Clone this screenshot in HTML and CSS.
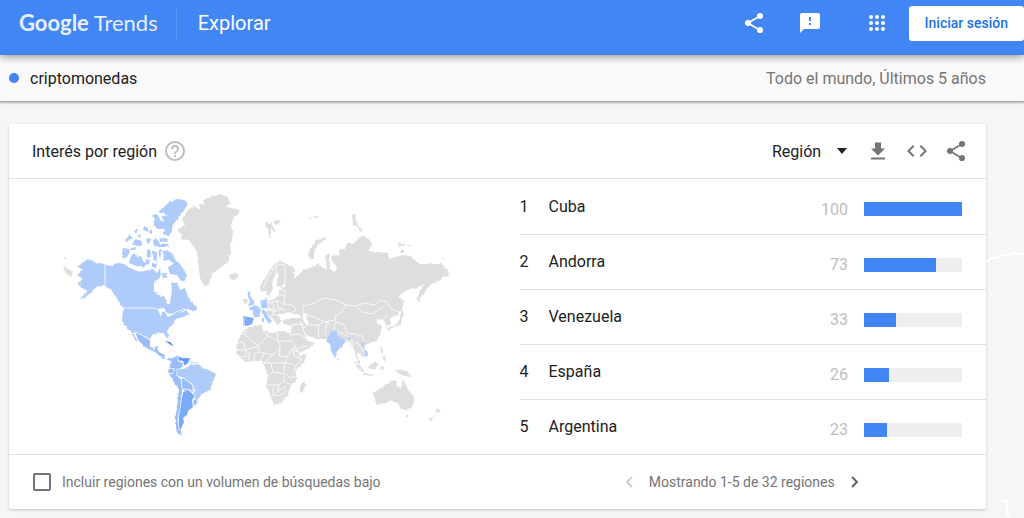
FILE: index.html
```html
<!DOCTYPE html>
<html lang="es">
<head>
    <meta charset="UTF-8">
    <meta name="viewport" content="width=device-width, initial-scale=1.0">
    <title>criptomonedas - Explorar - Google Trends</title>
    <link rel="stylesheet" href="styles.css">
</head>
<body>
    <header class="navbar">
        <a href="#" class="logo"><span class="logo-google">Google</span> Trends</a>
        <h1 class="page-name">Explorar</h1>
        <div class="nav-actions">
            <button class="icon-btn" aria-label="Compartir">
                <svg width="24" height="24" viewBox="0 0 24 24"><path d="M18 16.1c-.8 0-1.400.3-2 .8l-7.100-4.200c.1-.200.1-.5.1-.7s0-.5-.1-.7L16 7.200c.5.5 1.200.8 2 .8a3 3 0 1 0-3-3c0 .2 0 .5.1.7L8 9.800A3 3 0 1 0 8 14.200l7.100 4.200c-.1.200-.1.400-.1.600a3 3 0 1 0 3-2.900z"/></svg>
            </button>
            <button class="icon-btn feedback" aria-label="Enviar comentarios">
                <svg width="24" height="24" viewBox="0 0 24 24"><path d="M20 2H4a2 2 0 0 0-2 2v18l4-4h14a2 2 0 0 0 2-2V4a2 2 0 0 0-2-2zm-7 12h-2v-2h2v2zm0-4h-2V6h2v4z"/></svg>
            </button>
            <button class="icon-btn apps" aria-label="Aplicaciones de Google">
                <svg width="24" height="24" viewBox="0 0 24 24">
                    <circle cx="6" cy="6" r="2"/><circle cx="12" cy="6" r="2"/><circle cx="18" cy="6" r="2"/>
                    <circle cx="6" cy="12" r="2"/><circle cx="12" cy="12" r="2"/><circle cx="18" cy="12" r="2"/>
                    <circle cx="6" cy="18" r="2"/><circle cx="12" cy="18" r="2"/><circle cx="18" cy="18" r="2"/>
                </svg>
            </button>
            <a href="#" class="signin-btn">Iniciar sesión</a>
        </div>
    </header>

    <div class="term-bar">
        <span class="term-dot"></span>
        <span class="term">criptomonedas</span>
        <span class="filters">Todo el mundo, Últimos 5 años</span>
    </div>

    <main class="container">
        <svg class="bg-line" width="38" height="270" viewBox="0 0 38 270" fill="none" stroke="#fff" stroke-width="2">
            <path d="M0 12L6 8L10 8L16 5L22 5L28 3L38 4"/>
            <path d="M16 251H21V262L24 268"/>
        </svg>
        <section class="card">
            <div class="card-header">
                <h2>Interés por región</h2>
                <button class="icon-btn help" aria-label="Ayuda">
                    <svg width="24" height="24" viewBox="0 0 24 24"><path d="M11 18h2v-2h-2v2zm1-16a10 10 0 1 0 0 20 10 10 0 0 0 0-20zm0 18a8 8 0 1 1 0-16 8 8 0 0 1 0 16zm0-14a4 4 0 0 0-4 4h2a2 2 0 1 1 4 0c0 2-3 1.750-3 5h2c0-2.250 3-2.500 3-5a4 4 0 0 0-4-4z"/></svg>
                </button>
                <div class="card-tools">
                    <select class="region-select" aria-label="Tipo de zona">
                        <option>Región</option>
                        <option>Ciudad</option>
                    </select>
                    <svg class="caret" width="10" height="6" viewBox="0 0 10 6"><path d="M0 0h10L5 6z"/></svg>
                    <button class="icon-btn" aria-label="Descargar">
                        <svg width="24" height="24" viewBox="0 0 24 24"><path d="M19 9.500h-4v-6H9v6H5l7 7 7-7zM5 18.500v2h14v-2H5z"/></svg>
                    </button>
                    <button class="icon-btn" aria-label="Insertar">
                        <svg width="24" height="24" viewBox="0 0 24 24"><path d="M9.400 16.600L4.800 12l4.600-4.600L8 6l-6 6 6 6 1.400-1.400zm5.200 0l4.600-4.600-4.600-4.600L16 6l6 6-6 6-1.400-1.400z"/></svg>
                    </button>
                    <button class="icon-btn" aria-label="Compartir">
                        <svg width="24" height="24" viewBox="0 0 24 24"><path d="M18 16.100c-.8 0-1.400.3-2 .8l-7.100-4.200c.1-.2.1-.5.1-.7s0-.5-.1-.7L16 7.200c.5.5 1.200.8 2 .8a3 3 0 1 0-3-3c0 .2 0 .5.1.7L8 9.800A3 3 0 1 0 8 14.200l7.100 4.200c-.1.200-.1.400-.1.600a3 3 0 1 0 3-2.900z"/></svg>
                    </button>
                </div>
            </div>

            <div class="card-body">
                <div class="map">
                    <svg width="410" height="260" viewBox="50 185 410 260" role="img" aria-label="Mapa del mundo">
                        <defs>
                            <filter id="coast" x="-5%" y="-5%" width="110%" height="110%" color-interpolation-filters="sRGB">
                                <feTurbulence type="fractalNoise" baseFrequency="0.35" numOctaves="1" seed="4"/>
                                <feDisplacementMap in="SourceGraphic" scale="3" xChannelSelector="R" yChannelSelector="G"/>
                                <feGaussianBlur stdDeviation="0.35"/>
                            </filter>
                        </defs>

                        <g class="land" filter="url(#coast)">
                            <!-- Greenland, Iceland, Svalbard -->
                            <path d="M213 196L222 194L229 199L231 203L225 207L233 208L240 210L238 215L234 217L231 225L233 235L230 245L231 253L228 262L220 268L212 274L209 285L204 286L200 278L198 262L197 252L193 245L189 240L180 239L182 235L177 230L185 225L182 219L188 210L194 206L200 210L199 203L205 205L203 200Z"/>
                            <path d="M229 275L237 273L239 277L234 280L230 279Z"/>
                            <path d="M265 222L268 222L269 226L271 221L272 226L276 231L274 232L271 228L271 237L269 236L268 229L266 227ZM273 221L280 220L279 224L275 225Z"/>
                            <path d="M63 266L68 269L73 272L71 277L66 273ZM64 258h2v1h-2Z"/>
                            <!-- Arctic islands of Russia -->
                            <path d="M352 215L355 214L356 220L359 227L353 225ZM358 226L363 230L360 232ZM398 243L405 243L404 246L399 246ZM325 237L326 239L318 244L314 252L314 259L310 259L308 255L311 247L316 241ZM308 218h3v1h-3ZM314 216h4v2h-4ZM407 245h4v1h-4ZM401 250h3v2h-3ZM442 258h3v1h-3Z"/>
                            <!-- Scandinavia -->
                            <path d="M260 288L262 282L267 276L270 270L275 264L280 261L285 263L293 267L296 271L290 274L286 272L285 282L282 287L277 286L277 280L279 275L277 272L274 277L272 284L273 288L269 297L266 291L261 292Z"/>
                            <path d="M244 299L247 299L246 304L243 303Z"/>
                            <!-- Europe and Asia -->
                            <path d="M268 301L274 299L278 296L279 289L285 287L285 270L291 272L295 274L293 279L299 275L303 270L310 268L318 264L323 268L327 270L325 256L329 253L330 269L335 272L337 268L332 260L332 254L340 256L338 251L345 248L347 243L354 243L358 239L362 235L370 240L372 245L368 251L378 252L388 253L389 259L396 257L403 255L411 256L413 259L420 264L430 264L442 264L448 271L450 276L442 277L440 281L431 284L427 289L422 295L419 303L417 298L420 290L425 283L417 288L407 290L398 297L404 301L402 309L397 315L390 318L391 324L387 326L383 320L378 319L376 322L382 326L380 335L376 341L366 344L364 348L367 354L363 357L358 352L357 356L361 364L358 363L355 352L351 345L347 340L335 336L326 339L316 339L307 335L303 333L308 341L315 343L308 349L299 353L295 346L290 336L292 326L284 324L283 320L291 318L287 314L278 314L281 321L278 326L274 320L267 314L267 306Z"/>
                            <!-- Africa -->
                            <path d="M248 327L255 326L262 325L263 330L273 333L278 331L289 332L292 340L296 351L300 356L307 354L304 362L296 371L296 381L290 387L288 395L281 403L274 405L271 397L266 385L268 376L264 366L262 361L253 361L245 362L236 353L237 343L242 333Z"/>
                            <path d="M304 381L306 384L303 392L300 393L300 386Z"/>
                            <!-- Australia and Pacific islands -->
                            <path d="M373 393L378 390L383 387L386 384L390 383L392 380L397 381L396 385L401 388L403 379L406 385L409 391L414 397L414 402L411 408L405 410L400 408L398 403L390 401L383 404L376 405L375 399Z"/>
                            <path d="M405 415L409 415L407 418ZM437 407L441 411L436 414ZM436 415L431 421L428 420ZM394 369L400 370L407 371L412 377L404 376L398 373ZM368 367L374 362L378 363L375 370L369 369ZM354 360L358 364L365 371L363 373L357 367ZM364 373L374 375L373 376L364 375ZM380 367L384 366L382 371ZM380 347L383 348L383 354L381 352ZM382 356L386 357L385 361ZM401 311L405 314L402 317L401 324L395 327L390 329L388 332L387 328L396 325L400 319ZM398 300L401 306L403 312L400 311ZM337 358L339 360L337 361Z"/>
                            <!-- Guyanas -->
                            <path d="M189 360L197 362L199 364L192 366Z"/>
                        </g>

                        <g class="low" filter="url(#coast)">
                            <!-- Alaska and Canada -->
                            <path d="M82 263L88 259L97 263L105 264L110 266L118 263L124 264L130 268L140 272L153 269L157 273L160 268L161 275L159 278L154 283L154 292L159 295L165 297L167 304L170 303L172 290L171 283L177 283L180 290L185 288L188 297L192 303L197 307L196 311L190 310L185 309L178 314L186 310L190 314L183 317L176 319L171 326L167 331L169 339L166 337L163 333L153 334L150 339L143 336L135 333L127 329L122 321L123 308L116 297L110 289L104 286L98 286L93 290L86 297L80 299L87 291L80 287L78 282L83 279L77 275L83 270L78 267Z"/>
                            <!-- Canadian archipelago -->
                            <path d="M158 212L163 208L168 203L173 200L178 199L184 200L188 204L183 212L178 218L173 225L172 231L169 236L163 234L165 229L158 229L153 224L155 219L152 216L157 214L160 219L163 222L162 216L168 215Z"/>
                            <path d="M123 248L129 249L130 252L127 257L123 259L122 254ZM131 256L134 253L137 257L141 256L143 261L147 264L143 267L136 266L129 263ZM163 251L167 250L173 254L175 260L180 264L184 270L187 275L184 282L180 280L177 275L170 274L168 268L173 264L170 260L164 260Z"/>
                            <path d="M147 250L150 249L151 257L147 258ZM153 251L157 252L157 262L153 260ZM158 250L162 250L160 259ZM153 244L155 238L158 240L160 244L168 244L169 247L156 247ZM159 237L163 239L168 239L167 242L160 241ZM144 226L148 228L148 232L143 230ZM149 230L152 229L152 234L150 233ZM134 231L138 229L136 234ZM147 238L151 239L149 244L146 242ZM136 239L142 241L141 246L136 246L132 244ZM125 240L130 235L132 238L126 242ZM131 248L136 247L135 250L131 250ZM138 235L141 234L140 238ZM152 263L157 264L156 268L152 267ZM162 273L167 273L167 278L162 277ZM145 259L150 260L149 265L146 264Z"/>
                            <!-- Brazil -->
                            <path d="M178 370L184 369L190 365L199 364L202 368L209 370L216 374L213 382L210 390L202 394L197 401L192 396L195 391L191 385L184 378L177 376Z"/>
                            <!-- United Kingdom, France, Germany, Italy -->
                            <path d="M247 290L250 292L251 297L254 301L254 305L248 306L250 301L248 297ZM249 308L256 305L261 309L259 317L253 317L253 311ZM260 301L267 299L268 308L262 309ZM261 310L266 311L268 316L272 321L269 324L263 315ZM262 319h2v3h-2Z"/>
                            <!-- India, Vietnam -->
                            <path d="M333 330L337 331L337 336L346 340L344 344L339 349L335 358L331 351L330 344L326 341L329 335ZM347 339L353 336L353 339ZM361 343L365 343L363 347L368 352L367 356L364 357L366 353Z"/>
                        </g>

                        <g class="mid" filter="url(#coast)">
                            <!-- Mexico and Central America -->
                            <path d="M135 332L142 335L150 340L150 347L154 349L158 346L157 351L163 354L166 359L173 359L171 361L163 358L155 352L145 347L139 341ZM131 331L133 333L138 342L135 340Z"/>
                            <!-- Colombia, Ecuador, Peru, Bolivia, Chile -->
                            <path d="M173 358L178 355L179 361L184 363L181 369L177 375L180 379L184 378L192 385L194 391L190 394L182 390L180 410L178 424L183 436L177 433L175 421L178 400L179 389L172 379L168 372L170 365Z"/>
                            <path d="M193 399L198 402L194 406Z"/>
                        </g>

                        <g class="high">
                            <!-- Argentina, Spain -->
                            <path d="M183 392L188 391L195 395L192 401L193 407L188 411L187 415L183 418L184 422L181 429L177 429L179 420L179 406Z"/>
                            <path d="M243 316L254 318L252 324L247 326L243 325Z"/>
                        </g>
                        <path class="higher" d="M178 356L182 358L190 358L188 363L184 366L183 361L178 360Z"/>
                        <path class="top" d="M165 341L170 342L174 346L171 345Z"/>

                        <!-- Lakes and inland seas -->
                        <path class="water" d="M284 313L289 312L293 314L298 314L302 318L292 318L285 317ZM303 314L308 313L306 317L309 324L306 325L303 319ZM157 309L164 308L166 311L162 312L161 317L159 312ZM165 312L170 314L174 313L168 317Z"/>

                        <g class="borders">
                            <path d="M105 264V287M122 308H153L162 310L171 316L176 312L184 309M135 332L142 335L150 340M157 350L160 347"/>
                            <path d="M178 356L178 361L184 363L181 369L177 369L177 376L183 378L192 384L194 391L190 390L184 389L182 395L180 408L178 420L179 430M168 368L175 369L172 374L168 373M181 378L182 389M189 390L195 396L192 401M192 358V364L199 364M182 366L190 365"/>
                            <path d="M263 288L268 278L273 269L280 264L284 265M276 273L276 267M285 265V285M268 300V309L274 312L281 309L285 304L284 296L278 294M268 303L277 301L285 304L294 306L296 310L291 313M273 301L274 312L271 317M277 300L278 308L286 311M262 309H276M279 290H285V296M273 314L282 317M244 317V325"/>
                            <path d="M303 314L303 306L315 303L324 298L336 300L346 305L356 306L364 303L375 305L380 300L387 302L391 309L399 312M346 305L342 312L335 316L336 322L344 325L347 333L355 334L362 336L364 342M356 306L362 312L372 314L383 307M304 315L314 317L325 322L335 320M309 325L317 325L325 322L330 324M300 321L303 328L308 325M318 325L319 337M327 322L325 335M291 325L302 324L305 335M290 335L299 334L308 340M296 349L307 346M335 322L334 331M352 337V346L357 342L364 352M382 320L388 315M337 331L347 336"/>
                            <path d="M248 327L244 334L258 346L268 336L264 330M244 334H237M237 342H243L246 350H237M246 350L258 346L259 352L254 354V361M246 350V357L238 356M249 352V361M268 336L280 342V348L273 355L264 353L259 352M277 332L278 342M280 341H292M280 348L279 356L287 357L293 348M293 348L294 356L302 359L295 366V372M287 357L285 363L293 364M264 353L261 361M273 355L264 363H271L273 372L267 376M271 363L285 363L284 372L290 378L296 376M273 372L284 374V381L279 385H267M284 381L291 385M279 385L278 391L273 396V388M278 391L286 387M275 396L281 395L287 390M282 398L286 398"/>
                        </g>
                    </svg>
                </div>

                <table class="ranking">
                    <tbody>
                        <tr>
                            <td class="rank">1</td>
                            <td class="name">Cuba</td>
                            <td class="value">100</td>
                            <td class="bar-cell"><div class="bar"><div class="bar-fill" style="width: 100%"></div></div></td>
                        </tr>
                        <tr>
                            <td class="rank">2</td>
                            <td class="name">Andorra</td>
                            <td class="value">73</td>
                            <td class="bar-cell"><div class="bar"><div class="bar-fill" style="width: 73%"></div></div></td>
                        </tr>
                        <tr>
                            <td class="rank">3</td>
                            <td class="name">Venezuela</td>
                            <td class="value">33</td>
                            <td class="bar-cell"><div class="bar"><div class="bar-fill" style="width: 33%"></div></div></td>
                        </tr>
                        <tr>
                            <td class="rank">4</td>
                            <td class="name">España</td>
                            <td class="value">26</td>
                            <td class="bar-cell"><div class="bar"><div class="bar-fill" style="width: 26%"></div></div></td>
                        </tr>
                        <tr>
                            <td class="rank">5</td>
                            <td class="name">Argentina</td>
                            <td class="value">23</td>
                            <td class="bar-cell"><div class="bar"><div class="bar-fill" style="width: 23%"></div></div></td>
                        </tr>
                    </tbody>
                </table>
            </div>

            <div class="card-footer">
                <label class="low-volume">
                    <input type="checkbox">
                    Incluir regiones con un volumen de búsquedas bajo
                </label>
                <div class="pager">
                    <button class="icon-btn" aria-label="Anterior" disabled>
                        <svg width="8" height="12" viewBox="0 0 8 12"><path d="M7 1L2 6l5 5"/></svg>
                    </button>
                    <span>Mostrando 1-5 de 32 regiones</span>
                    <button class="icon-btn" aria-label="Siguiente">
                        <svg width="8" height="12" viewBox="0 0 8 12"><path d="M1 1l5 5-5 5"/></svg>
                    </button>
                </div>
            </div>
        </section>
    </main>
</body>
</html>
```
FILE: styles.css
```css
:root {
    --blue: #4285f4;
    --text: #212121;
    --muted: #757575;
    --line: #e0e0e0;
}

* {
    margin: 0;
    padding: 0;
    box-sizing: border-box;
}

body {
    background: #f6f6f6;
    color: var(--text);
    font-family: Roboto, sans-serif;
    font-size: 16px;
}

.icon-btn {
    display: flex;
    border: none;
    background: none;
    fill: currentColor;
    color: inherit;
    cursor: pointer;
}

/* Header */
.navbar {
    position: relative;
    display: flex;
    align-items: center;
    height: 55px;
    padding: 0 0 9px 19px;
    background: var(--blue);
    color: white;
    box-shadow: 0 2px 8px rgba(0,0,0,0.4);
}

.logo {
    padding-right: 18px;
    border-right: 1px solid #5c97f6;
    color: #e8f0fe;
    font-family: Lato, sans-serif;
    font-size: 22px;
    line-height: 32px;
    text-decoration: none;
}

.logo-google {
    font-weight: 700;
}

.page-name {
    margin-left: 21px;
    font-size: 20px;
    font-weight: 400;
}

.nav-actions {
    display: flex;
    align-items: center;
    margin-left: auto;
}

.nav-actions .feedback {
    margin-left: 32px;
}

.nav-actions .apps {
    margin-left: 43px;
}

.signin-btn {
    margin-left: 20px;
    padding: 0 16px;
    border-radius: 3px;
    background: white;
    color: #1a73e8;
    font-size: 14px;
    font-weight: 500;
    line-height: 35px;
    text-decoration: none;
}

/* Search term */
.term-bar {
    display: flex;
    align-items: center;
    height: 47px;
    padding: 0 38px 0 9px;
    border-bottom: 1px solid #aaa;
    background: #fafafa;
    box-shadow: 0 1px 2px rgba(0,0,0,0.3);
}

.term-dot {
    width: 10px;
    height: 10px;
    margin-right: 11px;
    border-radius: 50%;
    background: var(--blue);
}

.filters {
    margin-left: auto;
    color: var(--muted);
}

/* Card */
.container {
    position: relative;
    padding: 22px 38px 9px 9px;
}

.bg-line {
    position: absolute;
    top: 148px;
    right: 0;
}

.card {
    border-radius: 2px;
    background: white;
    box-shadow: 0 1px 3px rgba(0,0,0,0.2);
}

.card-header {
    display: flex;
    align-items: center;
    height: 55px;
    padding: 0 18px 0 23px;
    border-bottom: 1px solid var(--line);
}

.card-header h2 {
    font-size: 16px;
    font-weight: 400;
}

.help {
    margin-left: 6px;
    color: #bdbdbd;
}

.card-tools {
    display: flex;
    align-items: center;
    gap: 15px;
    margin-left: auto;
    color: var(--muted);
}

.region-select {
    appearance: none;
    border: none;
    background: none;
    color: var(--text);
    font: inherit;
}

.caret {
    margin-right: 4px;
    fill: var(--text);
}

.card-body {
    display: grid;
    grid-template-columns: 1fr 1fr;
}

/* Map */
.map {
    padding: 6px 0 0 41px;
}

.map svg {
    display: block;
}

.land {
    fill: #dedede;
}

.low {
    fill: #aecbfa;
}

.mid {
    fill: #99bdf9;
}

.high {
    fill: #7baaf7;
}

.higher {
    fill: #669df6;
}

.top {
    fill: #4285f4;
}

.water {
    fill: white;
}

.borders {
    fill: none;
    stroke: white;
    stroke-opacity: 0.8;
    stroke-width: 1px;
    stroke-linejoin: round;
}

/* Ranking */
.ranking {
    margin-left: 22px;
    border-collapse: collapse;
}

.ranking td {
    height: 55px;
    border-bottom: 1px solid var(--line);
    vertical-align: middle;
}

.ranking tr:last-child td {
    border-bottom: none;
}

.rank {
    width: 29px;
}

.ranking .value {
    width: 60px;
    padding: 6px 16px 0 0;
    color: #bdbdbd;
    text-align: right;
}

.bar-cell {
    width: 122px;
    padding: 6px 24px 0 0;
}

.bar {
    height: 14px;
    background: #eee;
}

.bar-fill {
    height: 100%;
    background: var(--blue);
}

/* Footer */
.card-footer {
    display: grid;
    grid-template-columns: 1fr 1fr;
    align-items: center;
    height: 55px;
    border-top: 1px solid var(--line);
    color: var(--muted);
    font-size: 14px;
}

.low-volume {
    display: flex;
    align-items: center;
    gap: 11px;
    padding-left: 24px;
}

.low-volume input {
    appearance: none;
    width: 18px;
    height: 18px;
    border: 2px solid #757575;
    border-radius: 2px;
}

.pager {
    display: flex;
    align-items: center;
    justify-content: center;
    gap: 16px;
}

.pager svg {
    fill: none;
    stroke: #616161;
    stroke-width: 2px;
}

.pager button:disabled svg {
    stroke: #ccc;
}

@media (max-width: 768px) {
    .card-body,
    .card-footer {
        grid-template-columns: 1fr;
        height: auto;
    }

    .ranking {
        margin-left: 0;
    }
}
```
